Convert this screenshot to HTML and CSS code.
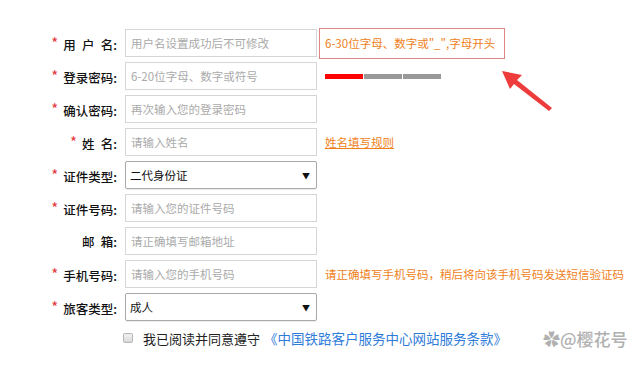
FILE: index.html
```html
<!DOCTYPE html>
<html lang="zh-CN">
<head>
  <meta charset="UTF-8">
  <title>用户注册</title>
  <link rel="stylesheet" href="styles.css">
</head>
<body>
  <form class="reg">
    <div class="row">
      <label class="lbl"><span class="req">*</span>用&ensp;户&ensp;名:</label>
      <input class="field" placeholder="用户名设置成功后不可修改">
      <div class="tip">6-30位字母、数字或"_",字母开头</div>
    </div>
    <div class="row">
      <label class="lbl"><span class="req">*</span>登录密码:</label>
      <input class="field" type="password" placeholder="6-20位字母、数字或符号">
      <div class="strength">
        <span class="seg on"></span><span class="seg"></span><span class="seg"></span>
      </div>
    </div>
    <div class="row">
      <label class="lbl"><span class="req">*</span>确认密码:</label>
      <input class="field" type="password" placeholder="再次输入您的登录密码">
    </div>
    <div class="row">
      <label class="lbl"><span class="req">*</span>姓&ensp;名:</label>
      <input class="field" placeholder="请输入姓名">
      <a class="rule" href="#">姓名填写规则</a>
    </div>
    <div class="row">
      <label class="lbl"><span class="req">*</span>证件类型:</label>
      <div class="select"><span>二代身份证</span><span class="caret">▼</span></div>
    </div>
    <div class="row">
      <label class="lbl"><span class="req">*</span>证件号码:</label>
      <input class="field" placeholder="请输入您的证件号码">
    </div>
    <div class="row">
      <label class="lbl">邮&ensp;箱:</label>
      <input class="field" placeholder="请正确填写邮箱地址">
    </div>
    <div class="row">
      <label class="lbl"><span class="req">*</span>手机号码:</label>
      <input class="field" placeholder="请输入您的手机号码">
      <span class="hint">请正确填写手机号码，稍后将向该手机号码发送短信验证码</span>
    </div>
    <div class="row">
      <label class="lbl"><span class="req">*</span>旅客类型:</label>
      <div class="select"><span>成人</span><span class="caret">▼</span></div>
    </div>
    <div class="agree">
      <span class="box"></span>
      <span>我已阅读并同意遵守</span>
      <a class="terms" href="#">《中国铁路客户服务中心网站服务条款》</a>
      <span class="mark">✿@樱花号</span>
    </div>

    <svg class="arrow" width="60" height="50" viewBox="495 65 60 50">
      <polygon points="502,71 522,75 517,80 552,108 549,111 514,84 510,89" fill="#ee3b3b"/>
    </svg>
  </form>
</body>
</html>
```

FILE: styles.css
```css
body {
  margin: 0;
  font-family: "Noto Sans CJK SC", "Liberation Sans", sans-serif;
  color: #222;
  background: #fff;
}
.reg {
  position: relative;
  width: 640px;
  height: 367px;
  padding-top: 29px;
  box-sizing: border-box;
}
.row {
  display: flex;
  align-items: center;
  height: 28px;
  margin-bottom: 5px;
}
.lbl {
  width: 117px;
  margin-right: 8px;
  flex-shrink: 0;
  text-align: right;
  font-size: 12.5px;
  font-weight: 500;
  color: #111;
}
.req {
  color: #e4393c;
  font-size: 15px;
  font-weight: normal;
  margin-right: 5px;
  position: relative;
  top: -1px;
}
.field {
  width: 192px;
  height: 28px;
  box-sizing: border-box;
  border: 1px solid #d6d6d6;
  padding: 0 5px;
  font-family: inherit;
  font-size: 11.5px;
  color: #333;
  outline: none;
}
.field::placeholder {
  color: #aaa;
}
.select {
  width: 192px;
  height: 28px;
  box-sizing: border-box;
  border: 1px solid #a9a9a9;
  border-radius: 2px;
  box-shadow: 0 1px 1px rgba(0,0,0,0.08);
  padding: 0 6px 0 4px;
  display: flex;
  align-items: center;
  justify-content: space-between;
  font-size: 11.5px;
  color: #111;
}
.caret {
  font-size: 8px;
  color: #111;
}
.tip {
  margin-left: 2px;
  height: 31px;
  width: 186px;
  box-sizing: border-box;
  border: 1px solid #e08585;
  padding-left: 5px;
  display: flex;
  align-items: center;
  font-size: 11.5px;
  color: #ef7f1a;
  white-space: nowrap;
  flex-shrink: 0;
}
.strength {
  display: flex;
  gap: 1px;
  margin-left: 8px;
}
.seg {
  width: 38px;
  height: 5px;
  background: #999;
}
.seg.on {
  background: #f00;
}
.rule {
  margin-left: 8px;
  font-size: 11.5px;
  color: #ef7f1a;
}
.hint {
  margin-left: 8px;
  font-size: 11.5px;
  color: #ef7f1a;
  white-space: nowrap;
}
.agree {
  display: flex;
  align-items: center;
  padding-left: 123px;
  height: 24px;
  margin-top: 4px;
  font-size: 13px;
}
.box {
  width: 10px;
  height: 10px;
  box-sizing: border-box;
  border: 1px solid #b5b5b5;
  border-radius: 2px;
  background: linear-gradient(#f2f2f2, #d9d9d9);
  margin-right: 10px;
}
.terms {
  color: #2f7cd8;
  text-decoration: none;
  font-size: 13.5px;
  margin-left: 4px;
}
.mark {
  margin-left: 36px;
  font-size: 17px;
  font-weight: 500;
  color: #b0b0b0;
}
.arrow {
  position: absolute;
  left: 495px;
  top: 65px;
}
```
